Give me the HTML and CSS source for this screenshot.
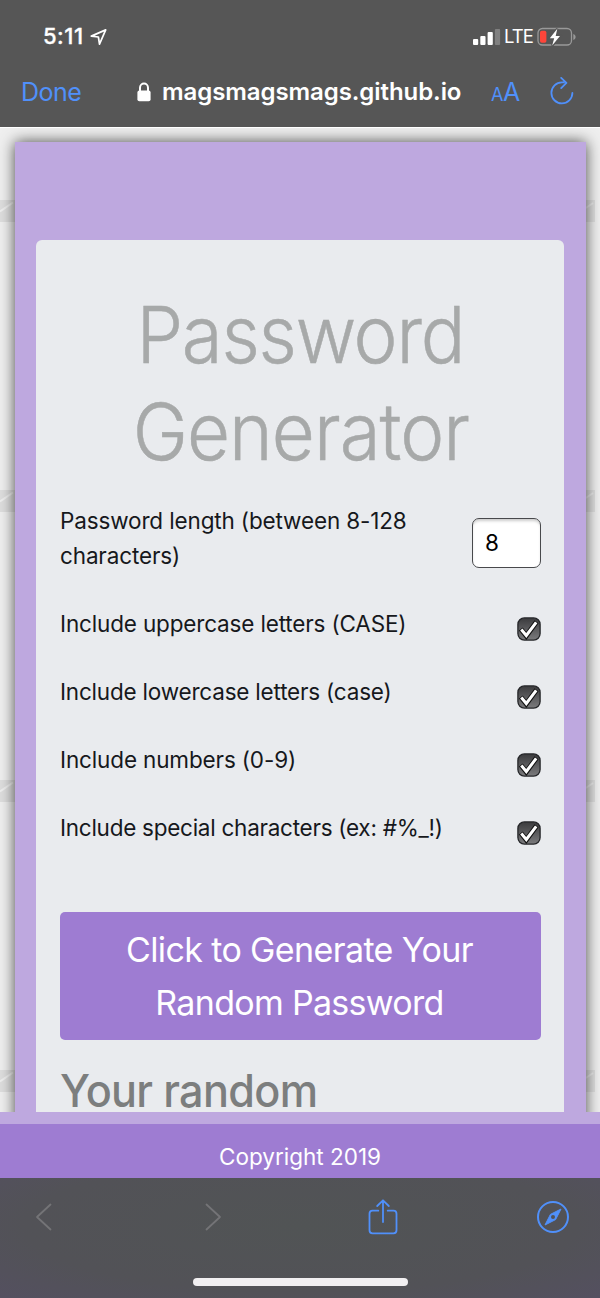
FILE: index.html
```html
<!DOCTYPE html>
<html lang="en">
<head>
<meta charset="utf-8">
<title>Password Generator</title>
<link rel="stylesheet" href="styles.css">
</head>
<body>
<header class="browser-top">
  <div class="status">
    <span class="time">5:11</span>
    <svg class="location" width="18" height="18" viewBox="0 0 18 18"><path d="M1.3 8.1 15.7 1.9 9.5 16.2 8.4 9z" fill="none" stroke="#fff" stroke-width="1.7" stroke-linejoin="round"/></svg>
    <svg class="signal" width="28" height="18" viewBox="0 0 28 18"><g fill="#fff"><rect x="0" y="11" width="5.2" height="6" rx="1"/><rect x="7.3" y="8" width="5.2" height="9" rx="1"/><rect x="14.6" y="4" width="5.2" height="13" rx="1"/><rect x="21.9" y="1" width="5.2" height="16" rx="1" fill="#808080"/></g></svg>
    <span class="carrier">LTE</span>
    <svg class="battery" width="39" height="20" viewBox="0 0 39 20"><rect x="1" y="1.5" width="33.5" height="16.5" rx="4.5" fill="none" stroke="#999" stroke-width="1.3"/><path d="M36.3 7v6c3-1.2 3-4.8 0-6z" fill="#999"/><rect x="3" y="3.8" width="6.4" height="12" rx="1.8" fill="#ff453a"/><path d="M20.3 1.8 12.8 11.3h4.4l-2 7.3L23 8.9h-4.3z" fill="#fff" stroke="#565656" stroke-width="2.5" paint-order="stroke"/></svg>
  </div>
  <nav class="address">
    <span class="done">Done</span>
    <svg class="lock" width="14" height="20" viewBox="0 0 14 20"><path d="M3 10V5.8C3 .2 11 .2 11 5.8V10" fill="none" stroke="#fff" stroke-width="2"/><rect x=".4" y="8.6" width="13.2" height="10.6" rx="2" fill="#fff"/></svg>
    <span class="url">magsmagsmags.github.io</span>
    <span class="reader"><small class="small-a">A</small>A</span>
    <svg class="reload" width="24" height="28" viewBox="0 0 24 28"><path d="M13.7 5.4H12A10.5 10.5 0 1 0 22.4 16M11.2.9l5.2 5-5.2 5.2" fill="none" stroke="#5090fa" stroke-width="1.8" stroke-linecap="round" stroke-linejoin="round"/></svg>
  </nav>
</header>
<main class="page">
  <div class="gutter left">
    <svg class="mail" viewBox="0 0 15 22"><path d="M0 0h15v22H0z" fill="#dedede"/><path d="M0 11.5 13 2.5" stroke="#efefef" stroke-width="2"/></svg>
    <svg class="mail" viewBox="0 0 15 22"><path d="M0 0h15v22H0z" fill="#dedede"/><path d="M0 11.5 13 2.5" stroke="#efefef" stroke-width="2"/></svg>
    <svg class="mail" viewBox="0 0 15 22"><path d="M0 0h15v22H0z" fill="#dedede"/><path d="M0 11.5 13 2.5" stroke="#efefef" stroke-width="2"/></svg>
    <svg class="mail" viewBox="0 0 15 22"><path d="M0 0h15v22H0z" fill="#dedede"/><path d="M0 11.5 13 2.5" stroke="#efefef" stroke-width="2"/></svg>
  </div>
  <div class="wrapper">
    <section class="card">
      <h1 class="title"><span class="t1">Password</span><br><span class="t2">Generator</span></h1>
      <div class="row length"><label class="l1" for="len">Password length (between 8-128<br>characters)</label><input class="number" id="len" value="8"></div>
      <div class="row"><span class="l2">Include uppercase letters (CASE)</span><svg class="check" viewBox="0 0 24 24"><use href="#tick"/></svg></div>
      <div class="row"><span class="l3">Include lowercase letters (case)</span><svg class="check" viewBox="0 0 24 24"><use href="#tick"/></svg></div>
      <div class="row"><span class="l4">Include numbers (0-9)</span><svg class="check" viewBox="0 0 24 24"><use href="#tick"/></svg></div>
      <div class="row"><span class="l5">Include special characters (ex: #%_!)</span><svg class="check" viewBox="0 0 24 24"><use href="#tick"/></svg></div>
      <button class="generate"><span class="b1">Click to Generate Your</span><br><span class="b2">Random Password</span></button>
      <h2 class="result">Your random</h2>
    </section>
  </div>
  <div class="gutter right">
    <svg class="mail" viewBox="0 0 9 22"><path d="M0 0h9v22H0z" fill="#e0e0e0"/><path d="M0 8 7 3" stroke="#efefef" stroke-width="2"/></svg>
    <svg class="mail" viewBox="0 0 9 22"><path d="M0 0h9v22H0z" fill="#e0e0e0"/><path d="M0 8 7 3" stroke="#efefef" stroke-width="2"/></svg>
    <svg class="mail" viewBox="0 0 9 22"><path d="M0 0h9v22H0z" fill="#e0e0e0"/><path d="M0 8 7 3" stroke="#efefef" stroke-width="2"/></svg>
    <svg class="mail" viewBox="0 0 9 22"><path d="M0 0h9v22H0z" fill="#e0e0e0"/><path d="M0 8 7 3" stroke="#efefef" stroke-width="2"/></svg>
  </div>
</main>
<footer class="copyright"><span class="copy-text">Copyright 2019</span></footer>
<div class="toolbar">
  <div class="tools">
    <svg class="back" width="18" height="30" viewBox="0 0 18 30"><path d="M15.5 2.5 2 15l13.5 12.5" fill="none" stroke="#747477" stroke-width="1.8" stroke-linecap="round" stroke-linejoin="round"/></svg>
    <svg class="forward" width="18" height="30" viewBox="0 0 18 30"><path d="M2.5 2.5 16 15 2.5 27.5" fill="none" stroke="#747477" stroke-width="1.8" stroke-linecap="round" stroke-linejoin="round"/></svg>
    <svg class="share" width="30" height="36" viewBox="0 0 30 36"><path d="M10.3 11.7H4.5a3 3 0 0 0-3 3v16.6a3 3 0 0 0 3 3h21a3 3 0 0 0 3-3V14.700a3 3 0 0 0-3-3h-5.800M15 23V1.300M9.200 7 15 1.300 20.800 7" fill="none" stroke="#5090fa" stroke-width="1.8" stroke-linecap="round" stroke-linejoin="round"/></svg>
    <svg class="compass" width="32" height="32" viewBox="0 0 32 32"><circle cx="16" cy="16" r="15" fill="none" stroke="#5090fa" stroke-width="2"/><path d="M24 8 18.600 18.600 8 24 13.400 13.400z" fill="#5090fa" stroke="#5090fa" stroke-linejoin="round"/><circle cx="16" cy="16" r="2" fill="#525257"/></svg>
  </div>
  <div class="home"></div>
</div>
<svg width="0" height="0" class="defs"><defs>
  <linearGradient id="dark" x1="0" y1="0" x2="0" y2="1"><stop offset="0" stop-color="#3b3b3d"/><stop offset="1" stop-color="#7b7b7d"/></linearGradient>
  <symbol id="tick" viewBox="0 0 24 24"><rect x=".9" y=".9" width="22.200" height="22.200" rx="6.500" fill="url(#dark)" stroke="#252629" stroke-width="1.300"/><path d="m3.800 12 5.500 6.800L19.600 4.800" fill="none" stroke="#111" stroke-width="5"/><path d="m4.300 12.500 5 6L19.200 5.300" fill="none" stroke="#fff" stroke-width="3"/></symbol>
</defs></svg>
</body>
</html>
```
FILE: styles.css
```css
* { box-sizing: border-box; }
body { margin: 0; width: 600px; height: 1298px; overflow: hidden; display: flex; flex-direction: column; font-family: Inter, "Liberation Sans", sans-serif; color: #16181c; }
svg { display: block; flex: none; }
span { white-space: nowrap; }
.defs { position: absolute; }

.browser-top { height: 127px; flex: none; background: #565656; color: #fff; }
.status { height: 56px; padding: 16px 24px 0 43px; display: flex; align-items: center; }
.time { font-size: 22px; font-weight: 500; width: 47px; letter-spacing: .5px; -webkit-text-stroke: .3px #fff; }
.location { margin-top: 1px; }
.signal { margin-left: auto; margin-right: 3px; margin-top: 1px; }
.carrier { font-size: 18.500px; width: 33px; letter-spacing: -.9px; }
.battery { margin-top: 1px; }
.address { display: flex; height: 71px; align-items: center; padding: 0 0 0 21px; }
.done { font-size: 25px; color: #5090fa; width: 116px; letter-spacing: -.5px; }
.lock { margin-right: 11px; }
.url { font-size: 24px; font-weight: 600; width: 329px; letter-spacing: -.08px; }
.reader { width: 59px; color: #5090fa; font-size: 25px; letter-spacing: -.4px; }
.small-a { font-size: 18px; }
.reload { margin-top: -2px; }

.page { height: 985px; flex: none; display: flex; overflow: hidden; background: #efefef; border-top: 1px solid #fff; }
.gutter { width: 15px; padding-top: 72px; display: flex; flex-direction: column; gap: 268px; flex: none; }
.left .mail { width: 15px; height: 22px; }
.right .mail { width: 9px; height: 22px; }
.wrapper { width: 571px; height: 1040px; margin-top: 14px; padding: 98px 22px 0 21px; background: #bea8df; box-shadow: 0 0 14px rgba(0,0,0,.7); flex: none; z-index: 1; }
.card { height: 940px; background: #e9ebee; border-radius: 6px; padding: 46px 23px 0 24px; }
.title { margin: 0 0 24px; text-align: center; font-size: 79px; line-height: 97px; font-weight: 300; color: #a7a9a9; -webkit-text-stroke: .5px #a7a9a9; }
.t1, .t2 { display: inline-block; transform: scaleX(.94); }
.t1 { letter-spacing: -1.300px; }
.t2 { letter-spacing: -1px; }
.row { height: 68px; display: flex; justify-content: space-between; align-items: flex-start; font-size: 22.500px; line-height: 34.500px; }
.length { height: 103px; }
.l1, .l4 { letter-spacing: -.14px; }
.l2 { letter-spacing: -.16px; }
.l3 { letter-spacing: -.2px; }
.l5 { letter-spacing: -.26px; }
.number { width: 69px; height: 50px; margin-top: 14px; padding: 0 12px 2px; border: 1.500px solid #48494c; border-radius: 7px; background: #fff; box-shadow: inset 0 3px 3px -1px #ccc; font: 22.500px Inter, sans-serif; color: #000; }
.check { width: 24px; height: 24px; margin-top: 10px; }
.generate { display: block; width: 481px; height: 128px; margin: 33px 0 30px; padding: 0 2px 0 0; border: 0; border-radius: 5px; background: #9e7cd2; color: #fff; font: 34px/53px Inter, sans-serif; }
.b1 { letter-spacing: -.62px; }
.b2 { letter-spacing: -.7px; }
.result { margin: 0; font-size: 45px; line-height: 42px; font-weight: 500; color: #7c7e7e; white-space: nowrap; letter-spacing: -.700px; transform: scaleX(.96); transform-origin: left; }

.copyright { height: 66px; flex: none; background: #9e7cd2; border-top: 12px solid #bea8df; color: #fff; font-size: 22.500px; line-height: 66px; text-align: center; }
.toolbar { height: 120px; flex: none; background: radial-gradient(ellipse at 50% 40%, #515455 0, #525257 65%, #545060 100%); }
.tools { height: 78px; display: flex; align-items: center; padding-left: 35px; }
.forward { margin-left: 151px; }
.share { margin-left: 146px; }
.compass { margin-left: 139px; }
.home { width: 215px; height: 8px; border-radius: 4px; background: #f1eff1; margin: 22px auto 0; }
```
